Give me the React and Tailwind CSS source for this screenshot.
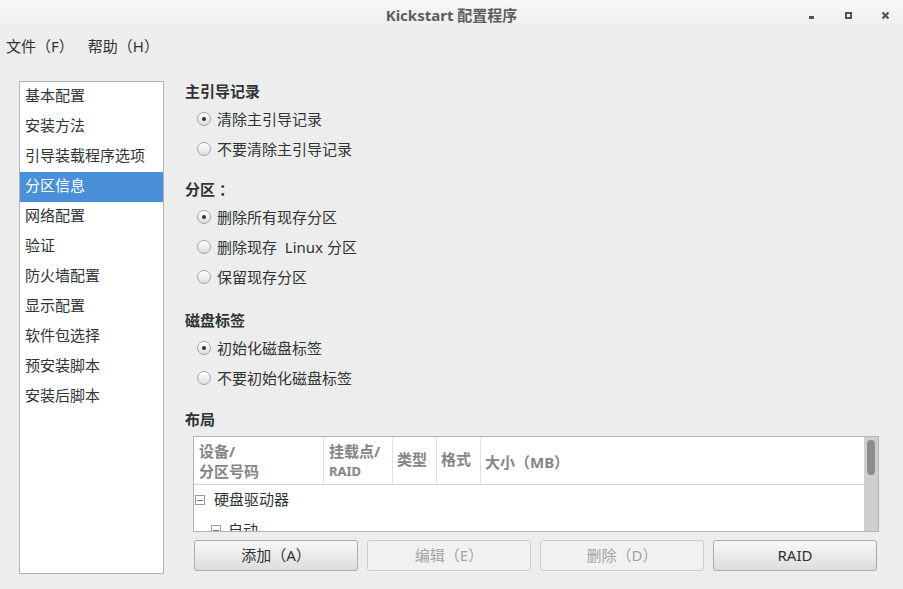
const FONT = { fontFamily: '"Noto Sans", "Noto Sans CJK SC", sans-serif' };

const NAV = [
  "基本配置",
  "安装方法",
  "引导装载程序选项",
  "分区信息",
  "网络配置",
  "验证",
  "防火墙配置",
  "显示配置",
  "软件包选择",
  "预安装脚本",
  "安装后脚本",
];

function TitleBar() {
  return (
    <div className="relative flex h-[32px] items-center justify-center bg-gradient-to-b from-[#f7f7f7] to-[#ececec] pb-[2px]">
      <span className="text-[15px] font-bold text-[#595f62]">Kickstart 配置程序</span>
      {/* window buttons */}
      <svg className="absolute right-0 top-0" width="103" height="32" viewBox="0 0 103 32">
        <rect x="9" y="16" width="5" height="3" fill="#4a5459" />
        <rect x="45" y="12" width="7" height="7" fill="#4a5459" />
        <rect x="47" y="14" width="3" height="3" fill="#f1f1f1" />
        <path d="M82.5 12.5 L88.5 18.5 M88.5 12.5 L82.5 18.5" stroke="#4a5459" strokeWidth="2.2" />
      </svg>
    </div>
  );
}

function Radio({ checked, children }) {
  return (
    <div className="flex h-[30px] items-center pl-[12px]">
      <span className="flex h-[14px] w-[14px] items-center justify-center rounded-full border border-[#a4a4a4] bg-gradient-to-b from-[#ffffff] to-[#dcdcdc] shadow-[inset_0_1px_0_#fff]">
        {checked && <span className="h-[4px] w-[4px] rounded-full bg-[#2e3436]" />}
      </span>
      <span className="ml-[6px] text-[15px] text-[#2e3436]">{children}</span>
    </div>
  );
}

function Heading({ children, className = "" }) {
  return (
    <div className={`h-[20px] text-[15px] font-bold leading-[20px] text-[#2e3436] ${className}`}>
      {children}
    </div>
  );
}

function Button({ children, disabled }) {
  return disabled ? (
    <button className="h-[31px] w-[164px] rounded-[3px] border border-[#cbcbcb] bg-[#f1f1f1] pb-[1px] text-[15px] text-[#a2a4a4]">
      {children}
    </button>
  ) : (
    <button className="h-[31px] w-[164px] rounded-[3px] border border-[#ababab] bg-gradient-to-b from-[#f8f8f8] to-[#dddddd] pb-[1px] text-[15px] text-[#2e3436]">
      {children}
    </button>
  );
}

function Expander() {
  return (
    <span className="flex h-[10px] w-[10px] items-center justify-center border border-[#9a9a9a] bg-white">
      <span className="h-px w-[6px] bg-[#7a7a7a]" />
    </span>
  );
}

function LayoutTable() {
  return (
    <div className="flex h-[96px] w-[686px] overflow-hidden border border-[#b4b4b4] bg-white">
      <div className="flex-1 overflow-hidden">
        <div className="flex h-[48px] border-b border-[#d4d4d4] text-[15px] font-bold leading-[20px] text-[#858585]">
          <div className="flex w-[130px] flex-col justify-center border-r border-[#e0e0e0] pl-[5px]">
            <span>设备/</span>
            <span>分区号码</span>
          </div>
          <div className="flex w-[69px] flex-col justify-center border-r border-[#e0e0e0] pl-[5px]">
            <span>挂载点/</span>
            <span className="text-[13px]">RAID</span>
          </div>
          <div className="flex w-[44px] items-center border-r border-[#e0e0e0] pl-[4px] pb-[4px]">类型</div>
          <div className="flex w-[44px] items-center border-r border-[#e0e0e0] pl-[4px] pb-[4px]">格式</div>
          <div className="flex flex-1 items-center pl-[4px] pt-[2px]">大小（MB）</div>
        </div>
        <div className="flex h-[30px] items-center pl-[1px] text-[15px] text-[#2e3436]">
          <Expander />
          <span className="ml-[9px] pb-[2px]">硬盘驱动器</span>
        </div>
        <div className="flex h-[30px] items-center pl-[17px] text-[15px] text-[#2e3436]">
          <Expander />
          <span className="ml-[7px]">自动</span>
        </div>
      </div>
      <div className="w-[14px] bg-[#cfcfcf] px-[3px] pt-[3px]">
        <div className="h-[35px] rounded-full bg-[#8d8d8d]" />
      </div>
    </div>
  );
}

export default function App() {
  return (
    <div className="flex h-[589px] w-[903px] flex-col overflow-hidden bg-[#ededed]" style={FONT}>
      <TitleBar />
      <div className="flex h-[30px] items-center gap-[14px] pl-[6px] pb-[2px] text-[15px] text-[#2e3436]">
        <span>文件（F）</span>
        <span>帮助（H）</span>
      </div>
      <div className="flex pt-[19px]">
        <div className="ml-[19px] h-[493px] w-[145px] border border-[#b2b2b2] bg-white">
          {NAV.map((n) => (
            <div
              key={n}
              className={`flex h-[30px] items-center pl-[5px] pb-[3px] text-[15px] ${
                n === "分区信息" ? "bg-[#4a90d9] text-white" : "text-[#2e3436]"
              }`}
            >
              {n}
            </div>
          ))}
        </div>
        <div className="ml-[21px] flex flex-col">
          <Heading>主引导记录</Heading>
          <div className="mt-[3px]">
            <Radio checked>清除主引导记录</Radio>
            <Radio>不要清除主引导记录</Radio>
          </div>
          <Heading className="mt-[15px]">
            分区<span className="ml-[4px]">：</span>
          </Heading>
          <div className="mt-[3px]">
            <Radio checked>删除所有现存分区</Radio>
            <Radio>删除现存 &nbsp;Linux 分区</Radio>
            <Radio>保留现存分区</Radio>
          </div>
          <Heading className="mt-[18px]">磁盘标签</Heading>
          <div className="mt-[3px]">
            <Radio checked>初始化磁盘标签</Radio>
            <Radio>不要初始化磁盘标签</Radio>
          </div>
          <Heading className="mt-[16px]">布局</Heading>
          <div className="ml-[8px] mt-[7px]">
            <LayoutTable />
            <div className="mt-[8px] flex gap-[9px] pl-[1px]">
              <Button>添加（A）</Button>
              <Button disabled>编辑（E）</Button>
              <Button disabled>删除（D）</Button>
              <Button>RAID</Button>
            </div>
          </div>
        </div>
      </div>
    </div>
  );
}
